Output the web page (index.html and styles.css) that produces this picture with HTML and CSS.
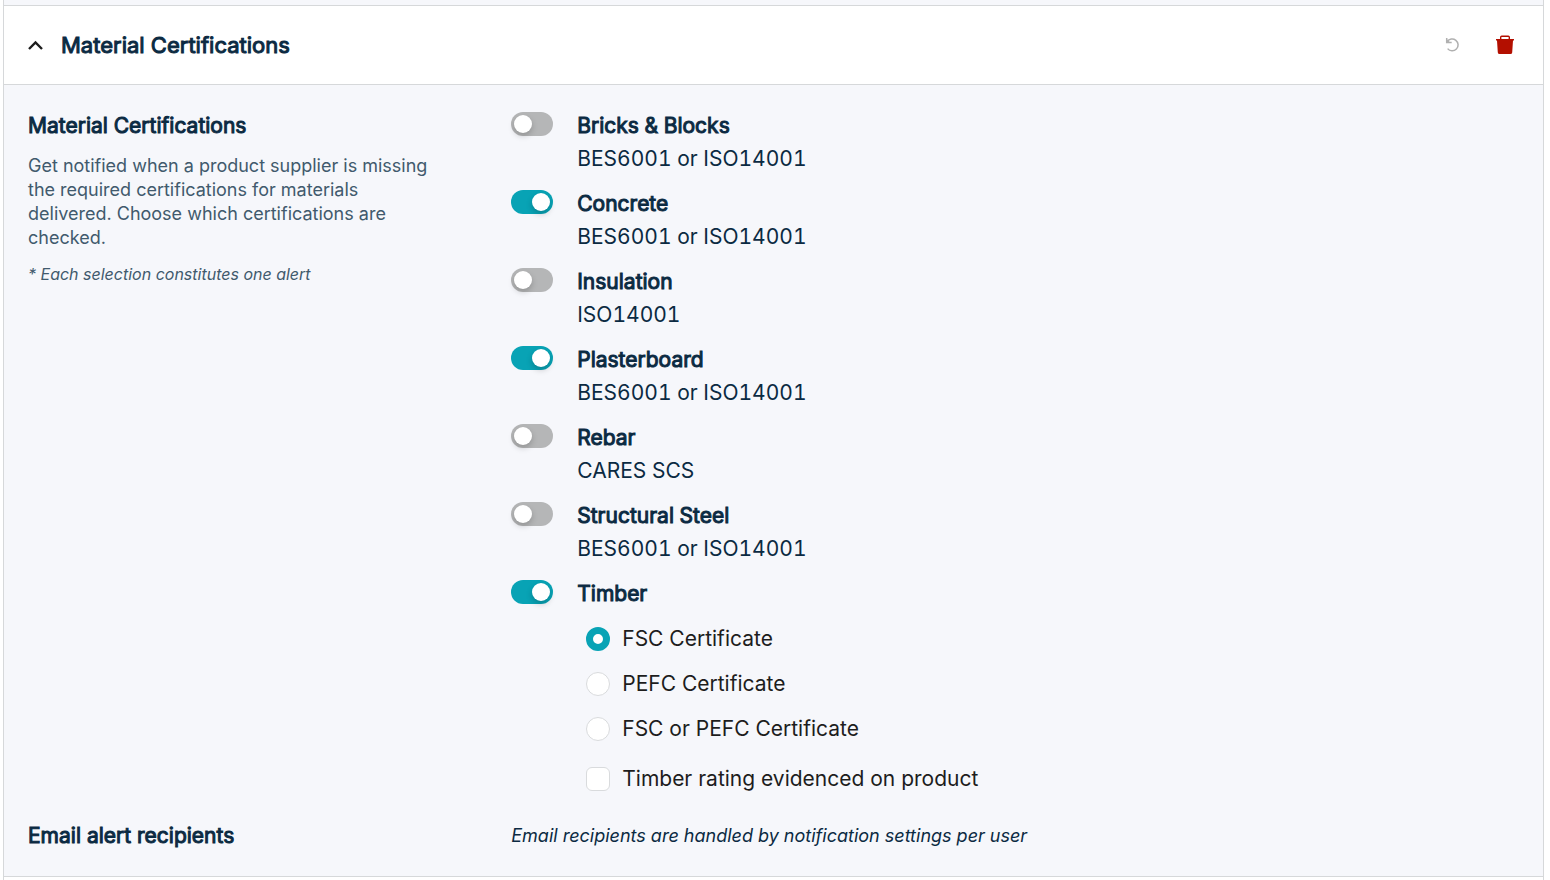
FILE: index.html
```html
<!DOCTYPE html>
<html lang="en">
<head>
    <meta charset="UTF-8">
    <meta name="viewport" content="width=device-width, initial-scale=1.0">
    <title>Material Certifications</title>
    <link rel="stylesheet" href="styles.css">
</head>
<body>
    <section class="panel">
        <header class="panel-header">
            <button class="icon-btn" type="button" aria-label="Collapse">
                <svg width="16" height="16" viewBox="0 0 16 16" fill="none" stroke="#1d1d1d" stroke-width="2.4"><path d="M1 12L7.5 5.5 14 12"/></svg>
            </button>
            <h1>Material Certifications</h1>
            <div class="actions">
                <button class="icon-btn" type="button" aria-label="Reset">
                    <svg width="16" height="16" viewBox="0 0 16 16" fill="none" stroke="#b0b0b0" stroke-width="1.5"><path d="M3.2 4.8A5.900 5.900 0 1 1 3.600 11.600"/><path d="M2.700 1v4.500h5"/><path d="M2.700 2v3.500h3.500z" fill="#b0b0b0" stroke="none"/></svg>
                </button>
                <button class="icon-btn" type="button" aria-label="Delete">
                    <svg width="20" height="20" viewBox="0 0 20 20" fill="#b30f00"><path d="M1 4h4V2.2Q5 .5 6.7 .5h6.6Q15 .5 15 2.2V4h4v1.6h-1L17.2 17.5Q17 19 15.5 19h-11Q3 19 2.8 17.5L2 5.6H1zM6.4 4h7.2V2H6.4z" fill-rule="evenodd"/></svg>
                </button>
            </div>
        </header>

        <form class="panel-body">
            <div class="info">
                <h2>Material Certifications</h2>
                <p>Get notified when a product supplier is missing the required certifications for materials delivered. Choose which certifications are checked.</p>
                <p class="note">* Each selection constitutes one alert</p>
            </div>

            <div class="options">
                <div class="option">
                    <input class="switch" type="checkbox" id="bricks">
                    <label for="bricks"><strong>Bricks &amp; Blocks</strong><span>BES6001 or ISO14001</span></label>
                </div>
                <div class="option">
                    <input class="switch" type="checkbox" id="concrete" checked>
                    <label for="concrete"><strong>Concrete</strong><span>BES6001 or ISO14001</span></label>
                </div>
                <div class="option">
                    <input class="switch" type="checkbox" id="insulation">
                    <label for="insulation"><strong>Insulation</strong><span>ISO14001</span></label>
                </div>
                <div class="option">
                    <input class="switch" type="checkbox" id="plasterboard" checked>
                    <label for="plasterboard"><strong>Plasterboard</strong><span>BES6001 or ISO14001</span></label>
                </div>
                <div class="option">
                    <input class="switch" type="checkbox" id="rebar">
                    <label for="rebar"><strong>Rebar</strong><span>CARES SCS</span></label>
                </div>
                <div class="option">
                    <input class="switch" type="checkbox" id="steel">
                    <label for="steel"><strong>Structural Steel</strong><span>BES6001 or ISO14001</span></label>
                </div>
                <div class="option">
                    <input class="switch" type="checkbox" id="timber" checked>
                    <label for="timber"><strong>Timber</strong></label>
                </div>
                <div class="choices">
                    <div class="choice">
                        <input class="radio" type="radio" name="timber-cert" id="fsc" checked>
                        <label for="fsc">FSC Certificate</label>
                    </div>
                    <div class="choice">
                        <input class="radio" type="radio" name="timber-cert" id="pefc">
                        <label for="pefc">PEFC Certificate</label>
                    </div>
                    <div class="choice">
                        <input class="radio" type="radio" name="timber-cert" id="either">
                        <label for="either">FSC or PEFC Certificate</label>
                    </div>
                    <div class="choice rating">
                        <input class="checkbox" type="checkbox" id="rating">
                        <label for="rating">Timber rating evidenced on product</label>
                    </div>
                </div>
            </div>

            <h2>Email alert recipients</h2>
            <p class="recipients">Email recipients are handled by notification settings per user</p>
        </form>
    </section>
</body>
</html>
```

FILE: styles.css
```css
* {
    box-sizing: border-box;
}

body {
    margin: 0 6px 0 3px;
    padding: 5px 0 3px;
    background: linear-gradient(#f6f7fb 5px, #fff 5px);
    border: solid #d6d8da;
    border-width: 0 1px;
    color: #0b2a42;
    font-family: Inter, sans-serif;
}

html {
    background-color: #fff;
}

h1, h2, p {
    margin: 0;
}

.panel {
    border: solid #d6d8da;
    border-width: 1px 0;
}

.panel-header {
    display: flex;
    align-items: center;
    height: 79px;
    padding: 0 28px 0 24px;
    background-color: #fff;
    border-bottom: 1px solid #d6d8da;
}

/* regular cut thickened with a stroke */
h1, h2, .option strong {
    font-weight: 400;
    -webkit-text-stroke: 1px;
}

h1 {
    margin-left: 17px;
    font-size: 22px;
}

h2 {
    font-size: 21px;
    line-height: 30px;
}

.icon-btn {
    display: flex;
    padding: 0;
    background: none;
    border: none;
    cursor: pointer;
}

.actions {
    display: flex;
    align-items: center;
    gap: 35px;
    margin-left: auto;
}

.panel-body {
    display: grid;
    grid-template-columns: 12fr 25fr;
    row-gap: 27px;
    padding: 26px 25px 25px 24px;
    background-color: #f6f7fb;
}

.info p {
    max-width: 410px;
    margin-top: 13px;
    color: #415a6d;
    font-size: 18px;
    line-height: 24px;
}

.info .note {
    margin-top: 12px;
    font-size: 16px;
    font-style: italic;
}

.options {
    display: flex;
    flex-direction: column;
    gap: 15px;
}

.option {
    display: flex;
    gap: 24px;
}

.option label {
    display: flex;
    flex-direction: column;
    gap: 3px;
    font-size: 21px;
    line-height: 30px;
    font-variant-numeric: tabular-nums;
}

input {
    flex: none;
    width: 24px;
    height: 24px;
    margin: 0;
    appearance: none;
    background-color: #fff;
    border: 1px solid #d9dbdd;
    cursor: pointer;
}

.switch {
    display: flex;
    align-items: center;
    width: 42px;
    margin-top: 1px;
    padding: 0 3px;
    background-color: #b5b6b7;
    border: none;
    border-radius: 12px;
}

.switch::before {
    content: "";
    width: 18px;
    height: 18px;
    background-color: #fff;
    border-radius: 50%;
    box-shadow: 0 3px 6px rgba(0, 0, 0, 0.2);
}

.switch:checked {
    justify-content: flex-end;
    background-color: #08a3b5;
}

.radio {
    border-radius: 50%;
}

.radio:checked {
    background-color: #fff;
    border: 7px solid #08a3b5;
}

.checkbox {
    border-radius: 6px;
}

.choices {
    display: flex;
    flex-direction: column;
    gap: 15px;
    padding-left: 75px;
}

.choice {
    display: flex;
    align-items: center;
    gap: 12px;
    color: #1d1d1d;
    font-size: 21px;
    line-height: 30px;
}

.rating {
    margin-top: 5px;
}

.recipients {
    font-size: 18px;
    line-height: 30px;
    font-style: italic;
}
```
